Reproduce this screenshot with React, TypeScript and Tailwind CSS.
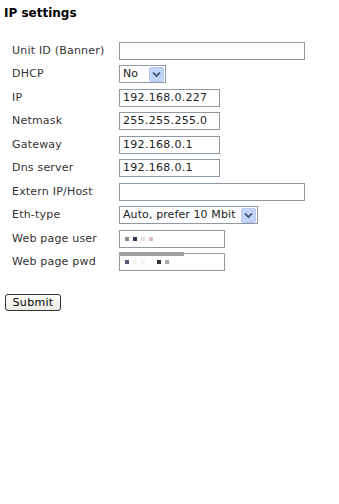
const font = { fontFamily: '"DejaVu Sans", Verdana, sans-serif' };

function Chevron() {
  return (
    <span className="flex h-[15px] w-[15px] items-center justify-center rounded-[2px] border border-[#b9c9ef] bg-[#c4d5fb]">
      <svg width="9" height="7" viewBox="0 0 9 7">
        <path d="M1 1.5 L4.5 5 L8 1.5" fill="none" stroke="#4d6185" strokeWidth="2" />
      </svg>
    </span>
  );
}

function TextBox({ value, w }: { value?: string; w: string }) {
  return (
    <div className={`flex h-[18px] items-center border border-[#8e99a4] bg-white pl-[3px] text-[11px] tracking-[0.3px] text-[#222] ${w}`}>
      {value}
    </div>
  );
}

function Select({ value, w }: { value: string; w: string }) {
  return (
    <div className={`flex h-[18px] items-center justify-between border border-[#8e99a4] bg-white pl-[3px] pr-px text-[11px] tracking-[0.1px] text-[#222] ${w}`}>
      <span>{value}</span>
      <Chevron />
    </div>
  );
}

function Masked({ pwd }: { pwd?: boolean }) {
  return (
    <div className="relative flex h-[18px] w-[106px] items-center border border-[#8e99a4] bg-white pl-[5px]">
      {pwd && <div className="absolute left-[-1px] top-[-2px] h-[4px] w-[65px] bg-[#a0a0a0]" />}
      <div className="absolute left-0 top-[2px] h-[14px] w-[63px] bg-white" />
      <div className="relative flex items-center gap-[4px]">
        {pwd ? (
          <>
            <span className="h-[4px] w-[4px] bg-[#555a70]" />
            <span className="h-[4px] w-[4px] bg-[#f4f6e4]" />
            <span className="h-[4px] w-[4px] bg-[#f7f4f6]" />
            <span className="ml-[8px] h-[4px] w-[4px] bg-[#333]" />
            <span className="h-[4px] w-[4px] bg-[#aaa]" />
          </>
        ) : (
          <>
            <span className="h-[4px] w-[4px] bg-[#8a8a8a]" />
            <span className="h-[4px] w-[4px] bg-[#33334a]" />
            <span className="h-[4px] w-[4px] bg-[#eedde6]" />
            <span className="h-[4px] w-[4px] bg-[#d9bccb]" />
          </>
        )}
      </div>
    </div>
  );
}

const rows: { label: string; field: React.ReactNode }[] = [
  { label: "Unit ID (Banner)", field: <TextBox w="w-[186px]" /> },
  { label: "DHCP", field: <Select value="No" w="w-[47px]" /> },
  { label: "IP", field: <TextBox value="192.168.0.227" w="w-[101px]" /> },
  { label: "Netmask", field: <TextBox value="255.255.255.0" w="w-[101px]" /> },
  { label: "Gateway", field: <TextBox value="192.168.0.1" w="w-[101px]" /> },
  { label: "Dns server", field: <TextBox value="192.168.0.1" w="w-[101px]" /> },
  { label: "Extern IP/Host", field: <TextBox w="w-[186px]" /> },
  { label: "Eth-type", field: <Select value="Auto, prefer 10 Mbit" w="w-[139px]" /> },
  { label: "Web page user", field: <Masked /> },
  { label: "Web page pwd", field: <Masked pwd /> },
];

export default function App() {
  return (
    <div className="min-h-[504px] w-[339px] bg-white text-[#222]" style={font}>
      <h1 className="pl-[4px] pt-[6px] text-[12px] font-bold leading-[15px] text-black">IP settings</h1>
      <div className="mt-[18px] flex flex-col pl-[12px]">
        {rows.map((r) => (
          <div key={r.label} className="flex h-[23.5px] items-center">
            <span className="w-[107px] text-[11px] tracking-[0.2px] text-[#333]">{r.label}</span>
            {r.field}
          </div>
        ))}
      </div>
      <div className="mt-[15px] pl-[5px]">
        <button
          type="button"
          className="h-[17px] w-[56px] rounded-[3px] border border-[#333] bg-gradient-to-b from-white to-[#ecebe4] text-[11px] leading-[15px] tracking-[0.3px] text-black"
        >
          Submit
        </button>
      </div>
    </div>
  );
}
